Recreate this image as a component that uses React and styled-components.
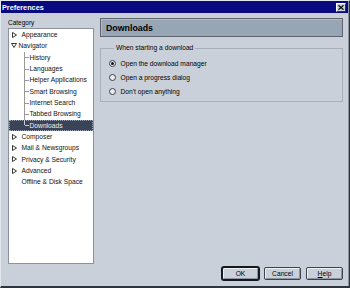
import React from 'react'
import styled, {createGlobalStyle} from 'styled-components'

const Global = createGlobalStyle`
	html, body { margin:0; padding:0; background:#c9d0d9; }
	body { font-family: "Liberation Sans", Arial, sans-serif; color:#000; }
`

const Window = styled.div`
	width:350px;
	height:288px;
	box-sizing:border-box;
	display:flex;
	flex-direction:column;
	background:#c9d0d9;
	border-left:1px solid #e4e8ec;
	border-top:1px solid #e4e8ec;
	border-right:1px solid #2f353d;
	border-bottom:2px solid #2f353d;
	box-shadow: inset -1px 0 0 #8a929c;
`
const TitleBar = styled.div`
	height:12px;
	flex:none;
	display:flex;
	align-items:center;
	justify-content:space-between;
	background:#0a0a80;
	padding:0 2px 0 1px;
	margin-right:1px;
	color:#fff;
	font-weight:bold;
	font-size:7.3px;
`
const CloseBtn = styled.span`
	width:10px;
	height:9px;
	box-sizing:border-box;
	display:flex;
	align-items:center;
	justify-content:center;
	background:#c9d0d9;
	border-top:1px solid #fff;
	border-left:1px solid #fff;
	border-right:1px solid #30353c;
	border-bottom:1px solid #30353c;
`
const Body = styled.div`
	flex:1;
	display:flex;
	gap:6px;
	padding:5px 6px 6px 7px;
	min-height:0;
`
const LeftCol = styled.div`
	width:86px;
	flex:none;
	display:flex;
	flex-direction:column;
`
const Label = styled.div`
	height:10px;
	line-height:10px;
	font-size:6.5px;
`
const TreeBox = styled.div`
	height:236px;
	box-sizing:border-box;
	background:#fff;
	border:1px solid #8a929d;
`
const Row = styled.div`
	height:11.33px;
	display:flex;
	align-items:center;
	padding-left:${p => p.$indent}px;
	font-size:6.7px;
	white-space:nowrap;
	background:${p => p.$selected ? '#3b4457' : 'transparent'};
	color:${p => p.$selected ? '#eef1f5' : '#111'};
	outline:${p => p.$selected ? '1px dotted #9aa4b6' : 'none'};
	outline-offset:-1px;
`
const Toggle = styled.span`
	width:6px;
	flex:none;
	display:flex;
	align-items:center;
	margin-right:${p => p.$gap}px;
`
const Connector = styled.span`
	width:4px;
	flex:none;
	align-self:${p => p.$last ? 'flex-start' : 'stretch'};
	height:${p => p.$last ? '50%' : 'auto'};
	border-left:1px solid ${p => p.$light ? '#c7cdd6' : '#9a9a9a'};
	position:relative;
	margin-right:0.5px;
	&::after {
		content:'';
		position:absolute;
		left:0;
		width:4px;
		top:${p => p.$last ? '100%' : '50%'};
		border-top:1px solid ${p => p.$light ? '#c7cdd6' : '#9a9a9a'};
	}
`
const RightCol = styled.div`
	flex:1;
	display:flex;
	flex-direction:column;
`
const Header = styled.div`
	height:19px;
	box-sizing:border-box;
	display:flex;
	align-items:center;
	padding-left:5px;
	background:#97a5b5;
	border:1px solid #5d646e;
	box-shadow: inset 1px 1px 0 #b3bdc8;
	font-weight:bold;
	font-size:8.8px;
`
const Group = styled.fieldset`
	margin:6px 0 0;
	padding:3.5px 0 2px 8px;
	border:1px solid #a6afba;
	min-width:0;
`
const Legend = styled.legend`
	margin-left:5px;
	padding:0 2px;
	line-height:10px;
	font-size:6.7px;
`
const Option = styled.div`
	height:14px;
	display:flex;
	align-items:center;
	gap:4.5px;
	font-size:6.7px;
`
const Radio = styled.span`
	width:7px;
	height:7px;
	box-sizing:border-box;
	border-radius:50%;
	border:1px solid #3b4049;
	background:#e9edf1;
	display:flex;
	align-items:center;
	justify-content:center;
	&::after {
		content:'';
		width:3px;
		height:3px;
		border-radius:50%;
		background:${p => p.$checked ? '#111' : 'transparent'};
	}
`
const Buttons = styled.div`
	margin-top:auto;
	display:flex;
	justify-content:flex-end;
	gap:5px;
`
const Button = styled.button`
	width:37px;
	height:13px;
	box-sizing:border-box;
	padding:0;
	font-family:inherit;
	font-size:6.7px;
	color:#000;
	background:#c9d0d9;
	border:1px solid ${p => p.$default ? '#15181d' : '#3e434b'};
	border-radius:2px;
	box-shadow:${p => p.$default
		? '0 0 0 1px #15181d, inset 1px 1px 0 #eef1f4, inset -1px -1px 0 #8d95a0'
		: 'inset 1px 1px 0 #eef1f4, inset -1px -1px 0 #8d95a0'};
`

function Arrow({open}){
	return open
		? <svg width="6" height="5" viewBox="0 0 6 5"><path d="M0.5 0.5 H5.5 L3 4.5 Z" fill="none" stroke="#222" strokeWidth="0.9"/></svg>
		: <svg width="5" height="6" viewBox="0 0 5 6"><path d="M0.5 0.5 V5.5 L4.5 3 Z" fill="none" stroke="#222" strokeWidth="0.9"/></svg>
}

const tree = [
	{label: 'Appearance', kind: 'closed'},
	{label: 'Navigator', kind: 'open'},
	{label: 'History', kind: 'child'},
	{label: 'Languages', kind: 'child'},
	{label: 'Helper Applications', kind: 'child'},
	{label: 'Smart Browsing', kind: 'child'},
	{label: 'Internet Search', kind: 'child'},
	{label: 'Tabbed Browsing', kind: 'child'},
	{label: 'Downloads', kind: 'last', selected: true},
	{label: 'Composer', kind: 'closed'},
	{label: 'Mail & Newsgroups', kind: 'closed'},
	{label: 'Privacy & Security', kind: 'closed'},
	{label: 'Advanced', kind: 'closed'},
	{label: 'Offline & Disk Space', kind: 'leaf'},
]

const options = ['Open the download manager', 'Open a progress dialog', "Don't open anything"]

export default function App(){
	return (
		<>
		<Global/>
		<Window>
			<TitleBar>
				<span>Preferences</span>
				<CloseBtn>
					<svg width="6" height="5" viewBox="0 0 6 5"><path d="M0.5 0.3 L5.5 4.7 M5.5 0.3 L0.5 4.7" stroke="#000" strokeWidth="1.2"/></svg>
				</CloseBtn>
			</TitleBar>
			<Body>
				<LeftCol>
					<Label>Category</Label>
					<TreeBox>
						{tree.map(item => {
							if(item.kind === 'child' || item.kind === 'last') {
								return (
									<Row key={item.label} $indent={15} $selected={item.selected}>
										<Connector $last={item.kind === 'last'} $light={item.selected}/>
										<span>{item.label}</span>
									</Row>
								)
							}
							return (
								<Row key={item.label} $indent={item.kind === 'open' ? 1.5 : 3}>
									<Toggle $gap={item.kind === 'open' ? 2 : 3.5}>
										{item.kind === 'leaf' ? null : <Arrow open={item.kind === 'open'}/>}
									</Toggle>
									<span>{item.label}</span>
								</Row>
							)
						})}
					</TreeBox>
				</LeftCol>
				<RightCol>
					<Header>Downloads</Header>
					<Group>
						<Legend>When starting a download</Legend>
						{options.map((o, i) => (
							<Option key={o}>
								<Radio $checked={i === 0}/>
								<span>{o}</span>
							</Option>
						))}
					</Group>
					<Buttons>
						<Button $default>OK</Button>
						<Button>Cancel</Button>
						<Button><u>H</u>elp</Button>
					</Buttons>
				</RightCol>
			</Body>
		</Window>
		</>
	)
}
